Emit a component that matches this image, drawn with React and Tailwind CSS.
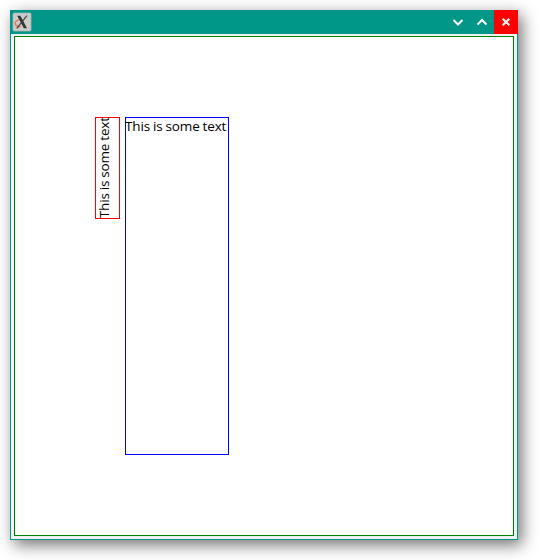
function XLogo() {
  return (
    <svg width="20" height="20" viewBox="0 0 20 20" className="block">
      <rect x="1" y="1" width="18" height="18" rx="1.2" fill="#c9cccb" stroke="#a9b5b2" strokeWidth="0.8" />
      <ellipse cx="10.3" cy="11.2" rx="6.8" ry="3.9" fill="none" stroke="#e6cba6" strokeWidth="1.2" />
      <path d="M7 7.8C3.8 8.5 2.6 10.5 3.5 12.4c.8 1.7 3 2.4 5.3 2.5" fill="none" stroke="#ee7548" strokeWidth="1.3" />
      <path d="M5.2 3.8h3.2l6.6 12.4h-3.2z" fill="#30363b" />
      <path d="M14.2 3.8h1.1L5.6 16.2H4.5z" fill="#30363b" stroke="#30363b" strokeWidth="0.3" />
    </svg>
  );
}

function Glyph({ d }) {
  return (
    <svg width="24" height="24" viewBox="0 0 24 24" fill="none" stroke="#fcfcfc" strokeWidth="2" className="block">
      <path d={d} />
    </svg>
  );
}

function TitleBar() {
  return (
    <div className="flex h-6 shrink-0 items-center justify-between bg-[#009688]">
      <div className="pl-0.5">
        <XLogo />
      </div>
      <div className="flex">
        <button aria-label="Minimize">
          <Glyph d="M7.5 10L12 14.5L16.5 10" />
        </button>
        <button aria-label="Maximize">
          <Glyph d="M7.5 14.5L12 10L16.5 14.5" />
        </button>
        <button aria-label="Close" className="bg-[#ff0000]">
          <Glyph d="M8.7 8.7L15.3 15.3M15.3 8.7L8.7 15.3" />
        </button>
      </div>
    </div>
  );
}

export default function App() {
  return (
    <div className="h-[560px] w-[538px] overflow-hidden bg-white p-2.5 font-['Open_Sans','Noto_Sans',sans-serif] text-[13.5px] leading-[18px] tracking-[-0.12px] [word-spacing:-0.5px] text-black">
      <div className="flex h-[530px] w-[508px] flex-col shadow-[4px_5px_15px_0px_rgba(0,0,0,0.55)]">
        <TitleBar />
        <div className="flex-1 border-x border-b border-[#009688] bg-[#eff0f1] px-[3px] pt-0.5 pb-[3px]">
          <div className="flex h-[500px] w-[500px] items-start gap-[5px] border border-[#008000] bg-white pt-20 pl-20">
            <div className="h-[102px] w-[25px] border border-[#ff0000]">
              <span className="-mt-px -ml-px block w-[18px] rotate-180 whitespace-nowrap [writing-mode:vertical-rl]">
                This is some text
              </span>
            </div>
            <div className="h-[338px] w-[104px] border border-[#0000ff]">
              <span className="-mt-px -ml-px block whitespace-nowrap">This is some text</span>
            </div>
          </div>
        </div>
      </div>
    </div>
  );
}
